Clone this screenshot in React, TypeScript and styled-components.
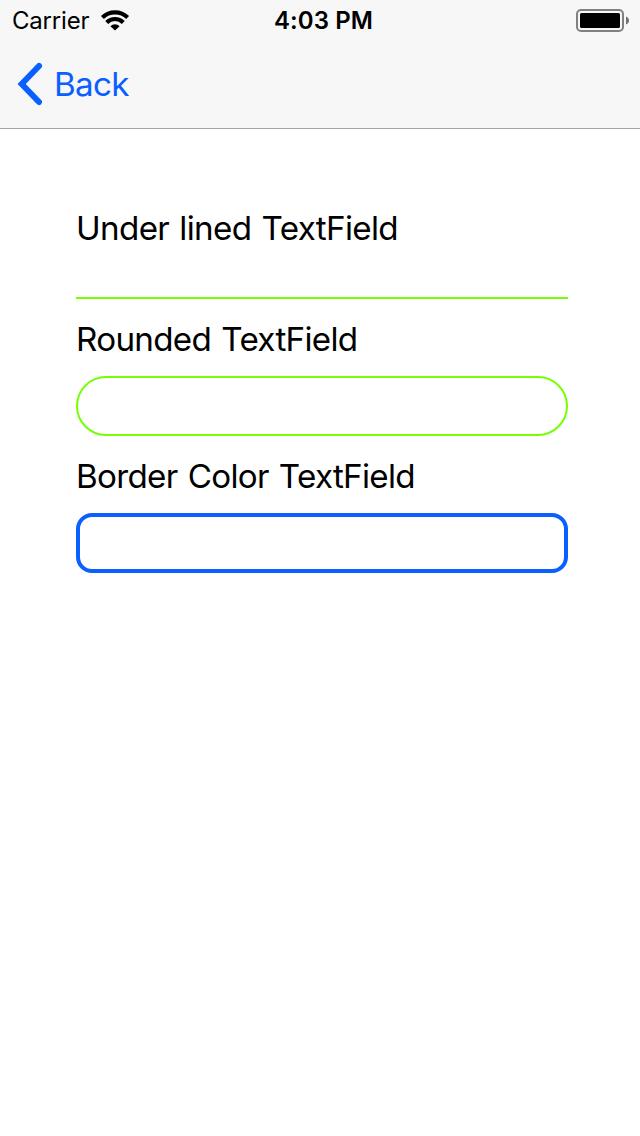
import React from "react";
import styled, { createGlobalStyle } from "styled-components";

const GlobalStyle = createGlobalStyle`
  *, *::before, *::after { box-sizing: border-box; }
  body { margin: 0; background: #fff; }
`;

const Screen = styled.div`
  display: flex;
  flex-direction: column;
  width: 640px;
  height: 1136px;
  background: #fff;
  color: #000;
  font-family: Inter, "Liberation Sans", sans-serif;
`;

const Header = styled.header`
  height: 129px;
  background: #f7f7f7;
  border-bottom: 1px solid #a3a3a3;
`;

const StatusBar = styled.div`
  display: grid;
  grid-template-columns: 1fr auto 1fr;
  align-items: center;
  height: 40px;
  padding: 2px 10px 0 12px;
`;

const CarrierGroup = styled.div`
  display: flex;
  align-items: center;
  gap: 11px;
`;

const CarrierName = styled.span`
  font-size: 24px;
  line-height: 38px;
  letter-spacing: -0.2px;
`;

const Clock = styled.time`
  padding-left: 5px;
  font-size: 24px;
  font-weight: 600;
  line-height: 38px;
  letter-spacing: 0.1px;
`;

const BatterySlot = styled.div`
  display: flex;
  justify-content: flex-end;
`;

const NavBar = styled.nav`
  display: flex;
  height: 88px;
  padding-left: 17px;
`;

const BackButton = styled.button`
  display: flex;
  align-items: center;
  gap: 11px;
  padding: 0;
  border: 0;
  background: none;
  color: #0a60ff;
  font: inherit;
  font-size: 33.2px;
  letter-spacing: -0.7px;
`;

const Form = styled.main`
  display: flex;
  flex-direction: column;
  gap: 20px;
  padding: 79px 72px 0 76px;
`;

const FieldGroup = styled.div<{ $gap: number }>`
  display: flex;
  flex-direction: column;
  gap: ${({ $gap }) => $gap}px;
`;

const Label = styled.label<{ $tracking: number }>`
  font-size: 33.2px;
  line-height: 41px;
  white-space: nowrap;
  word-spacing: 1.5px;
  letter-spacing: ${({ $tracking }) => $tracking}px;
`;

const TextField = styled.input`
  width: 100%;
  height: 60px;
  padding: 0 20px;
  background: transparent;
  outline: none;
  font: inherit;
  font-size: 28px;
`;

const UnderlinedField = styled(TextField)`
  height: 50px;
  padding: 0;
  border: 0;
  border-bottom: 2px solid #76ff03;
  border-radius: 0;
`;

const RoundedField = styled(TextField)`
  border: 2px solid #76ff03;
  border-radius: 30px;
`;

const BorderedField = styled(TextField)`
  border: 4px solid #0a60ff;
  border-radius: 16px;
`;

const WifiIcon = () => (
  <svg width="30" height="22" viewBox="0 0 30 22" fill="none" stroke="#000" strokeWidth="4.2">
    <path d="M2.4 7.5A18.3 18.3 0 0 1 27.6 7.5" />
    <path d="M6.7 12.4A11.8 11.8 0 0 1 23.3 12.4" />
    <path d="M15 20.6L10.4 16.2A6.6 6.6 0 0 1 19.6 16.2Z" fill="#000" stroke="none" />
  </svg>
);

const BatteryIcon = () => (
  <svg width="54" height="24" viewBox="0 0 54 24">
    <rect x="1" y="1" width="46" height="21" rx="4" fill="none" stroke="#808080" strokeWidth="2" />
    <rect x="4" y="4" width="40" height="15" rx="1.5" fill="#000" />
    <path d="M50 7.5C52 8.2 53 9.6 53 11.5S52 14.8 50 15.5Z" fill="#737373" />
  </svg>
);

const ChevronIcon = () => (
  <svg width="26" height="44" viewBox="0 0 26 44" fill="none" stroke="currentColor" strokeWidth="6" strokeLinecap="round" strokeLinejoin="miter">
    <path d="M22 4L4.7 22L22 40" />
  </svg>
);

export default function App() {
  return (
    <>
      <GlobalStyle />
      <Screen>
        <Header>
          <StatusBar>
            <CarrierGroup>
              <CarrierName>Carrier</CarrierName>
              <WifiIcon />
            </CarrierGroup>
            <Clock>4:03 PM</Clock>
            <BatterySlot>
              <BatteryIcon />
            </BatterySlot>
          </StatusBar>
          <NavBar>
            <BackButton type="button">
              <ChevronIcon />
              Back
            </BackButton>
          </NavBar>
        </Header>
        <Form>
          <FieldGroup $gap={0}>
            <Label htmlFor="underlined" $tracking={-0.66}>Under lined TextField</Label>
            <UnderlinedField id="underlined" />
          </FieldGroup>
          <FieldGroup $gap={16}>
            <Label htmlFor="rounded" $tracking={-0.69}>Rounded TextField</Label>
            <RoundedField id="rounded" />
          </FieldGroup>
          <FieldGroup $gap={16}>
            <Label htmlFor="bordered" $tracking={-0.7}>Border Color TextField</Label>
            <BorderedField id="bordered" />
          </FieldGroup>
        </Form>
      </Screen>
    </>
  );
}
